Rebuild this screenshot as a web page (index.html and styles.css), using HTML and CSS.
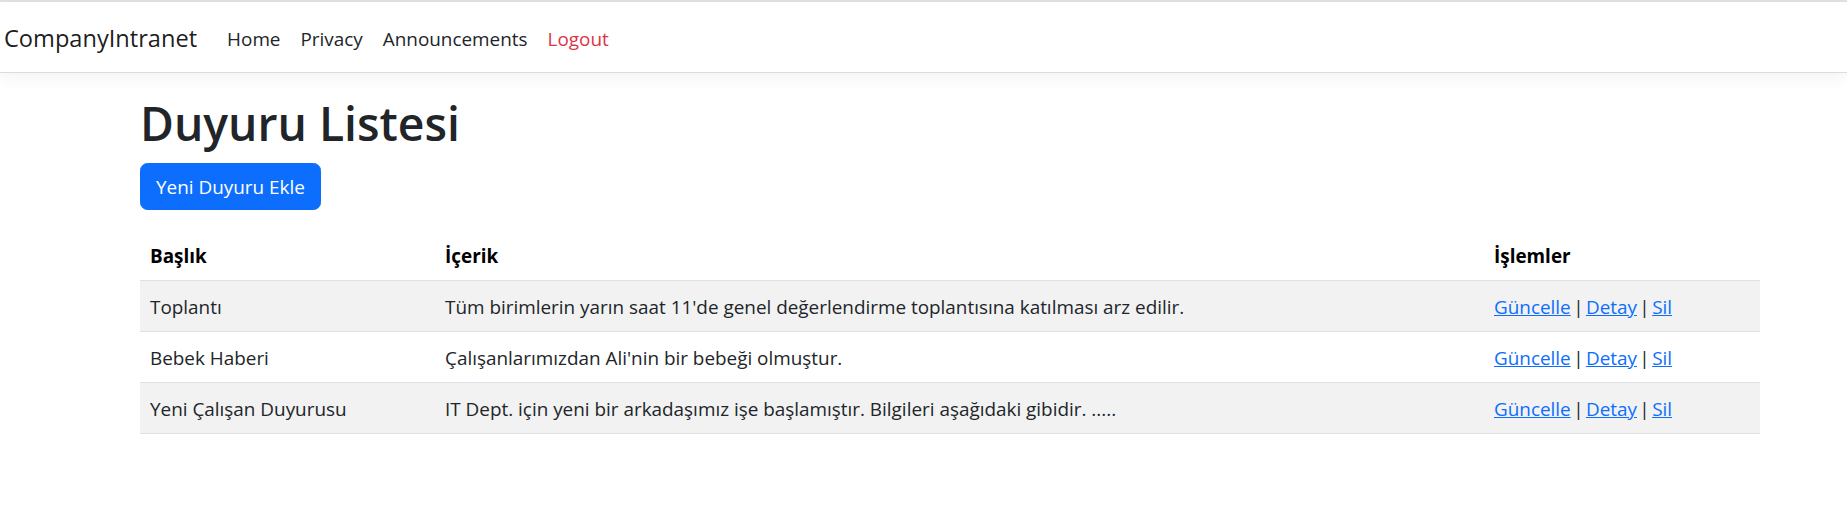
FILE: index.html
```html
<!DOCTYPE html>
<html lang="tr">
<head>
<meta charset="utf-8">
<title>Duyuru Listesi - CompanyIntranet</title>
<link rel="stylesheet" href="styles.css">
</head>
<body>
<div class="topline"></div>
<header class="navbar">
  <a class="brand" href="#">CompanyIntranet</a>
  <ul class="nav">
    <li><a class="nav-link" href="#">Home</a></li>
    <li><a class="nav-link" href="#">Privacy</a></li>
    <li><a class="nav-link" href="#">Announcements</a></li>
    <li><a class="nav-link danger" href="#">Logout</a></li>
  </ul>
</header>
<main class="container">
  <h1 class="title">Duyuru Listesi</h1>
  <p class="actions"><a class="btn" href="#">Yeni Duyuru Ekle</a></p>
  <table class="table">
    <colgroup>
      <col class="c1"><col class="c2"><col class="c3">
    </colgroup>
    <thead>
      <tr><th>Başlık</th><th>İçerik</th><th>İşlemler</th></tr>
    </thead>
    <tbody>
      <tr class="odd">
        <td>Toplantı</td>
        <td>Tüm birimlerin yarın saat 11'de genel değerlendirme toplantısına katılması arz edilir.</td>
        <td class="ops"><a href="#">Güncelle</a> | <a href="#">Detay</a> | <a href="#">Sil</a></td>
      </tr>
      <tr>
        <td>Bebek Haberi</td>
        <td>Çalışanlarımızdan Ali'nin bir bebeği olmuştur.</td>
        <td class="ops"><a href="#">Güncelle</a> | <a href="#">Detay</a> | <a href="#">Sil</a></td>
      </tr>
      <tr class="odd">
        <td>Yeni Çalışan Duyurusu</td>
        <td>IT Dept. için yeni bir arkadaşımız işe başlamıştır. Bilgileri aşağıdaki gibidir. .....</td>
        <td class="ops"><a href="#">Güncelle</a> | <a href="#">Detay</a> | <a href="#">Sil</a></td>
      </tr>
    </tbody>
  </table>
</main>
</body>
</html>
```
FILE: styles.css
```css
* { box-sizing: border-box; }
html, body { margin: 0; padding: 0; }
body {
  font-family: "Open Sans", "Noto Sans", sans-serif;
  font-size: 18.9px;
  line-height: 30px;
  color: #212529;
  background: #fff;
}
a { color: #0d6efd; }

.topline { height: 2px; background: #e1e1e1; }

.navbar {
  display: flex;
  align-items: center;
  height: 71px;
  padding: 12px 0 8px 4px;
  border-bottom: 1px solid #dcdcdc;
  box-shadow: 0 5px 15px rgba(0, 0, 0, 0.05);
  background: #fff;
}
.brand {
  font-size: 23.6px;
  line-height: 37.5px;
  padding: 6px 0;
  margin-right: 20px;
  color: rgba(0, 0, 0, 0.9);
  text-decoration: none;
}
.nav {
  display: flex;
  list-style: none;
  margin: 0;
  padding: 0;
}
.nav-link {
  display: block;
  padding: 10px 10px;
  color: #212529;
  text-decoration: none;
}
.nav-link.danger { color: #dc3545; }

.container {
  margin: 21px 0 0 140px;
  width: 1620px;
}
.title {
  margin: 0 0 9px 0;
  font-size: 46.3px;
  line-height: 60px;
  font-weight: 600;
  color: #212529;
}
.actions { margin: 0 0 20px 0; }
.btn {
  display: inline-block;
  padding: 7.5px 15px;
  border: 1px solid #0d6efd;
  border-radius: 7.5px;
  background: #0d6efd;
  color: #fff;
  text-decoration: none;
  line-height: 30px;
}

.table {
  width: 1620px;
  border-collapse: collapse;
  table-layout: fixed;
  color: #212529;
}
.c1 { width: 295px; }
.c2 { width: 1049px; }
.c3 { width: 276px; }
.table th, .table td {
  padding: 11px 10px 9px 10px;
  text-align: left;
  vertical-align: top;
  border-bottom: 1px solid #dee2e6;
  line-height: 30px;
  white-space: nowrap;
}
.table th { font-weight: 700; color: #000; }
.table tr.odd td { background: #f2f2f2; }
.table td a { color: #0d6efd; text-decoration: underline; }
.table td.ops { word-spacing: -2.5px; }
```
